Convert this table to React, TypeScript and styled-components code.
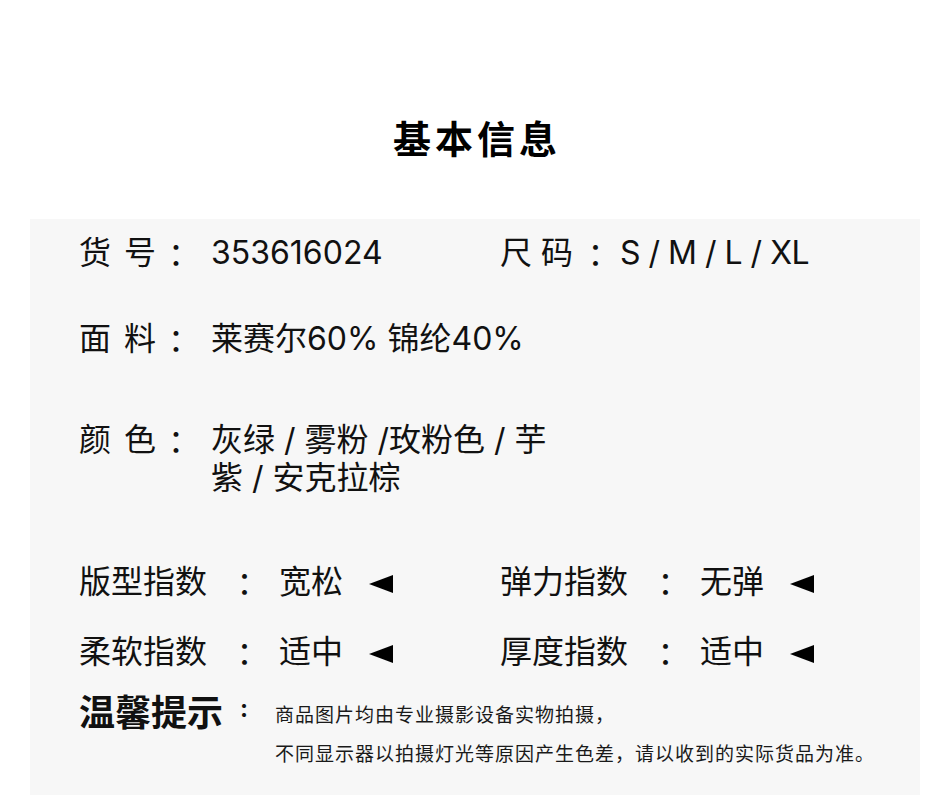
import { createGlobalStyle } from "styled-components";
import styled from "styled-components";

const GlobalStyle = createGlobalStyle`
  body {
    margin: 0;
    background: #ffffff;
    color: #111111;
    font-family: Inter, "Noto Sans CJK SC", sans-serif;
  }
`;

export default function App() {
  return (
    <Page>
      <GlobalStyle />
      <Header>
        <Title>基本信息</Title>
      </Header>
      <Panel>
        <Row $mt={0}>
          <Cell>
            <Label $w={77}>货 号</Label>
            <Colon $ml={4}>：</Colon>
            <Value $ml={19}>353616024</Value>
          </Cell>
          <Cell>
            <Label $w={72}>尺 码</Label>
            <Colon $ml={7.5}>：</Colon>
            <Value $ml={8.5} $ls={-0.5}>S / M / L / XL</Value>
          </Cell>
        </Row>
        <Row $mt={48}>
          <Cell $w={800}>
            <Label $w={77}>面 料</Label>
            <Colon $ml={4}>：</Colon>
            <Value $ml={19}>莱赛尔60% 锦纶40%</Value>
          </Cell>
        </Row>
        <Row $mt={63}>
          <Cell $w={800}>
            <Label $w={77}>颜 色</Label>
            <Colon $ml={4}>：</Colon>
            <Value $ml={19} $w={350} $wrap>
              灰绿 / 雾粉 /玫粉色 / 芋紫 / 安克拉棕
            </Value>
          </Cell>
        </Row>
        <Row $mt={66}>
          <Cell>
            <Label $w={128}>版型指数</Label>
            <Colon $ml={21.5}>：</Colon>
            <Value $ml={18.5}>
              宽松<Pointer aria-label="◄" />
            </Value>
          </Cell>
          <Cell>
            <Label $w={128}>弹力指数</Label>
            <Colon $ml={21.5}>：</Colon>
            <Value $ml={18.5}>
              无弹<Pointer aria-label="◄" />
            </Value>
          </Cell>
        </Row>
        <Row $mt={32}>
          <Cell>
            <Label $w={128}>柔软指数</Label>
            <Colon $ml={21.5}>：</Colon>
            <Value $ml={18.5}>
              适中<Pointer aria-label="◄" />
            </Value>
          </Cell>
          <Cell>
            <Label $w={128}>厚度指数</Label>
            <Colon $ml={21.5}>：</Colon>
            <Value $ml={18.5}>
              适中<Pointer aria-label="◄" />
            </Value>
          </Cell>
        </Row>
        <Row $mt={20}>
          <Cell $w={850}>
            <TipLabel>温馨提示</TipLabel>
            <TipColon>:</TipColon>
            <Notes>
              <NoteLine>商品图片均由专业摄影设备实物拍摄，</NoteLine>
              <NoteLine>不同显示器以拍摄灯光等原因产生色差，请以收到的实际货品为准。</NoteLine>
            </Notes>
          </Cell>
        </Row>
      </Panel>
    </Page>
  );
}

const Page = styled.div`
  width: 950px;
  min-height: 795px;
  overflow: hidden;
`;

const Header = styled.div`
  height: 219px;
  box-sizing: border-box;
  padding-top: 117px;
  display: flex;
  justify-content: center;
`;

const Title = styled.h1`
  margin: 0;
  padding-left: 4px;
  font-family: "Noto Sans CJK SC", sans-serif;
  font-size: 38px;
  line-height: 40px;
  font-weight: 700;
  letter-spacing: 4px;
  color: #000000;
`;

const Panel = styled.div`
  margin: 0 30px;
  min-height: 600px;
  box-sizing: border-box;
  padding: 15px 0 30px 49px;
  background: #f7f7f7;
`;

const Row = styled.div<{ $mt: number }>`
  display: flex;
  margin-top: ${(p) => p.$mt}px;
`;

const Cell = styled.div<{ $w?: number }>`
  display: flex;
  align-items: flex-start;
  width: ${(p) => p.$w ?? 421}px;
  flex-shrink: 0;
  font-size: 32px;
  line-height: 38px;
`;

const Label = styled.span<{ $w: number }>`
  width: ${(p) => p.$w}px;
  flex-shrink: 0;
  white-space: nowrap;
  text-align: justify;
  text-align-last: justify;
`;

const Colon = styled.span<{ $ml: number }>`
  width: 32px;
  flex-shrink: 0;
  margin-left: ${(p) => p.$ml}px;
  text-align: center;
  font-family: "Noto Sans CJK JP", sans-serif;
`;

const Value = styled.span<{ $ml: number; $w?: number; $wrap?: boolean; $ls?: number }>`
  flex-shrink: 0;
  margin-left: ${(p) => p.$ml}px;
  max-width: ${(p) => (p.$w ? `${p.$w}px` : "none")};
  letter-spacing: ${(p) => p.$ls ?? 0}px;
  white-space: ${(p) => (p.$wrap ? "normal" : "nowrap")};
`;

const Pointer = styled.span`
  display: inline-block;
  width: 0;
  height: 0;
  margin-left: 26px;
  border-top: 9px solid transparent;
  border-bottom: 9px solid transparent;
  border-right: 24px solid #000000;
  vertical-align: middle;
`;

const TipLabel = styled.span`
  width: 144px;
  flex-shrink: 0;
  font-family: "Noto Sans CJK SC", sans-serif;
  font-size: 36px;
  font-weight: 700;
`;

const TipColon = styled.span`
  width: 16px;
  flex-shrink: 0;
  margin-left: 13px;
  text-align: center;
  font-size: 24px;
  line-height: 36px;
  font-weight: 700;
`;

const Notes = styled.div`
  margin-left: 23px;
  margin-top: 4px;
  font-family: "Noto Sans CJK SC", sans-serif;
  font-size: 19px;
  letter-spacing: 1px;
  color: #1a1a1a;
`;

const NoteLine = styled.div`
  line-height: 38.5px;
  white-space: nowrap;
`;
